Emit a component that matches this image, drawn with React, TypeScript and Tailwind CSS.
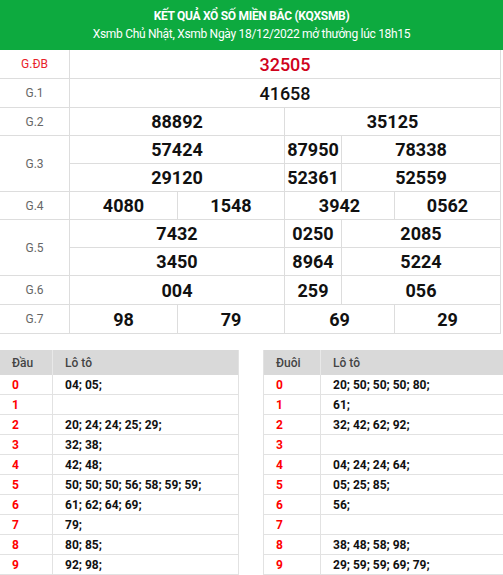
import React from 'react'

type Cell = { v: string; col: string; red?: boolean; medium?: boolean }
type Row = { label: string; span?: number; red?: boolean; cells: Cell[] }

const rows: Row[] = [
    { label: 'G.ĐB', red: true, cells: [{ v: '32505', col: 'col-span-5', red: true, medium: true }] },
    { label: 'G.1', cells: [{ v: '41658', col: 'col-span-5', medium: true }] },
    { label: 'G.2', cells: [{ v: '88892', col: 'col-span-2' }, { v: '35125', col: 'col-span-3' }] },
    {
        label: 'G.3', span: 2, cells: [
            { v: '57424', col: 'col-span-2' }, { v: '87950', col: 'col-span-1' }, { v: '78338', col: 'col-span-2' },
            { v: '29120', col: 'col-span-2' }, { v: '52361', col: 'col-span-1' }, { v: '52559', col: 'col-span-2' },
        ]
    },
    {
        label: 'G.4', cells: [
            { v: '4080', col: 'col-span-1' }, { v: '1548', col: 'col-span-1' }, { v: '3942', col: 'col-span-2' }, { v: '0562', col: 'col-span-1' },
        ]
    },
    {
        label: 'G.5', span: 2, cells: [
            { v: '7432', col: 'col-span-2' }, { v: '0250', col: 'col-span-1' }, { v: '2085', col: 'col-span-2' },
            { v: '3450', col: 'col-span-2' }, { v: '8964', col: 'col-span-1' }, { v: '5224', col: 'col-span-2' },
        ]
    },
    { label: 'G.6', cells: [{ v: '004', col: 'col-span-2' }, { v: '259', col: 'col-span-1' }, { v: '056', col: 'col-span-2' }] },
    {
        label: 'G.7', cells: [
            { v: '98', col: 'col-span-1' }, { v: '79', col: 'col-span-1' }, { v: '69', col: 'col-span-2' }, { v: '29', col: 'col-span-1' },
        ]
    },
]

const dau = ['04; 05;', '', '20; 24; 24; 25; 29;', '32; 38;', '42; 48;', '50; 50; 50; 56; 58; 59; 59;', '61; 62; 64; 69;', '79;', '80; 85;', '92; 98;']
const duoi = ['20; 50; 50; 50; 80;', '61;', '32; 42; 62; 92;', '', '04; 24; 24; 64;', '05; 25; 85;', '56;', '', '38; 48; 58; 98;', '29; 59; 59; 69; 79;']

function LotoTable({ title, data, first, className }: { title: string; data: string[]; first: string; className: string }) {
    return (
        <div className={className}>
            <div className="flex h-[25px] bg-[#d9d9d9] text-[12px] font-medium text-[#444]">
                <div className={`${first} flex items-center pl-3 border-r border-[#e8e8e8]`}>{title}</div>
                <div className="flex items-center pl-3">Lô tô</div>
            </div>
            {data.map((d, i) => (
                <div key={i} className="flex h-[20px] border-b border-[#e2e2e2] text-[12px] font-bold">
                    <div className={`${first} flex items-center pl-3 text-[#ff0000] border-r border-[#e2e2e2]`}>{i}</div>
                    <div className="flex items-center pl-3 text-[#111]">{d}</div>
                </div>
            ))}
        </div>
    )
}

export default function App() {
    return (
        <div className="w-[503px] h-[575px] overflow-hidden bg-white" style={{ fontFamily: 'Roboto, "Noto Sans", sans-serif' }}>
            {/* Header */}
            <div className="h-[50px] bg-[#0daa3f] flex flex-col items-center justify-center text-white">
                <div className="text-[12px] font-bold leading-[18px] tracking-[-0.3px]">KẾT QUẢ XỔ SỐ MIỀN BẮC (KQXSMB)</div>
                <div className="text-[12px] leading-[18px] tracking-[-0.3px]">Xsmb Chủ Nhật, Xsmb Ngày 18/12/2022 mở thưởng lúc 18h15</div>
            </div>

            {/* Results */}
            <div className="w-[501px] border-r border-b border-[#dddddd] bg-[#dddddd]">
                <div className="grid grid-cols-[69px_107px_106px_56px_52px_105px] grid-rows-[28px_28px_27px_27px_27px_27px_27px_27px_28px_28px] gap-px">
                    {rows.map(r => (
                        <React.Fragment key={r.label}>
                            <div className={`${r.span === 2 ? 'row-span-2' : ''} bg-white flex items-center justify-center text-[12px] ${r.red ? 'text-[#e8232a]' : 'text-[#666]'}`}>
                                {r.label}
                            </div>
                            {r.cells.map((c, i) => (
                                <div key={i} className={`${c.col} bg-white flex items-center justify-center text-[18px] ${c.medium ? 'font-medium' : 'font-bold'} ${c.red ? 'text-[#d0021b]' : 'text-[#111]'}`}>
                                    {c.v}
                                </div>
                            ))}
                        </React.Fragment>
                    ))}
                </div>
            </div>

            {/* Loto */}
            <div className="flex justify-between mt-[16px]">
                <LotoTable title="Đầu" data={dau} first="w-[53px]" className="w-[239px] border-r border-[#e2e2e2]" />
                <LotoTable title="Đuôi" data={duoi} first="w-[57px]" className="w-[240px] border-l border-[#e2e2e2]" />
            </div>
        </div>
    )
}
